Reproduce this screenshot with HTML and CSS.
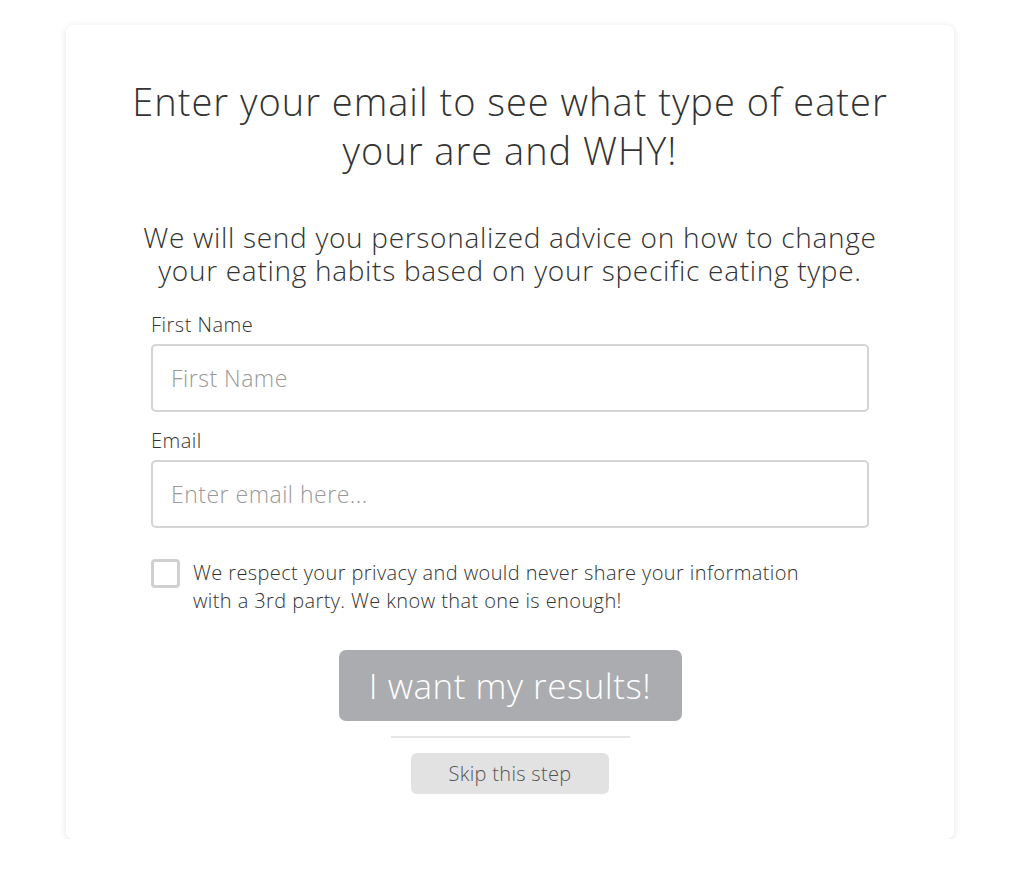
FILE: index.html
```html
<!DOCTYPE html>
<html lang="en">
<head>
    <meta charset="UTF-8">
    <meta name="viewport" content="width=device-width, initial-scale=1.0">
    <title>What type of eater are you?</title>
    <link rel="stylesheet" href="styles.css">
</head>
<body>

<div class="card">
    <h1 class="title">Enter your email to see what type of eater your are and WHY!</h1>
    <p class="intro">We will send you personalized advice on how to change your eating habits based on your specific eating type.</p>

    <form class="optin">
        <div class="field">
            <label for="firstName">First Name</label>
            <input type="text" id="firstName" name="firstName" placeholder="First Name">
        </div>
        <div class="field">
            <label for="email">Email</label>
            <input type="email" id="email" name="email" placeholder="Enter email here...">
        </div>
        <label class="consent">
            <span class="box"></span>
            <span>We respect your privacy and would never share your information with a 3rd party. We know that one is enough!</span>
        </label>
        <button type="submit" class="submit">I want my results!</button>
        <hr class="divider">
        <button type="button" class="skip">Skip this step</button>
    </form>
</div>

</body>
</html>
```

FILE: styles.css
```css
body {
    margin: 0;
    background: #fff;
    font-family: "Open Sans", Lato, sans-serif;
    color: #333;
}
.card {
    width: 888px;
    margin: 25px 0 0 66px;
    padding: 52px 40px 45px;
    box-sizing: border-box;
    background: #fff;
    border-radius: 7px;
    box-shadow: 0 1px 6px rgba(0, 0, 0, 0.12);
}
.title {
    margin: 0 10px 46px;
    font-size: 38px;
    font-weight: 300;
    line-height: 49px;
    letter-spacing: 1px;
    text-align: center;
    color: #333;
}
.intro {
    margin: 0 10px 25px;
    font-size: 28px;
    font-weight: 300;
    line-height: 33px;
    letter-spacing: 0.7px;
    text-align: center;
}
.optin {
    display: flex;
    flex-direction: column;
    margin: 0 45px;
}
.field {
    display: flex;
    flex-direction: column;
    margin-bottom: 16px;
}
.field label {
    font-size: 20px;
    font-weight: 300;
    line-height: 26px;
    letter-spacing: 0.5px;
    margin-bottom: 6px;
}
.field input {
    height: 68px;
    box-sizing: border-box;
    border: 2px solid #d4d4d4;
    border-radius: 5px;
    padding: 0 18px;
    font-family: inherit;
    font-size: 23px;
    font-weight: 300;
    letter-spacing: 0.5px;
    color: #333;
}
.field input::placeholder {
    color: #999;
}
.consent {
    display: flex;
    gap: 13px;
    margin-top: 15px;
    font-size: 20px;
    font-weight: 300;
    line-height: 28px;
    letter-spacing: 0.4px;
    padding-right: 36px;
}
.box {
    flex: none;
    width: 29px;
    height: 29px;
    box-sizing: border-box;
    border: 3px solid #d0d0d0;
    border-radius: 4px;
}
.submit {
    align-self: center;
    margin-top: 35px;
    width: 343px;
    height: 71px;
    background: #abacb0;
    border: none;
    border-radius: 7px;
    color: #fff;
    font-family: inherit;
    font-size: 35px;
    font-weight: 300;
    letter-spacing: 0.5px;
    cursor: pointer;
}
.divider {
    width: 239px;
    margin: 15px auto 0;
    border: none;
    border-top: 2px solid #e6e6e6;
}
.skip {
    align-self: center;
    margin-top: 15px;
    width: 198px;
    height: 41px;
    background: #e2e2e2;
    border: none;
    border-radius: 6px;
    color: #555;
    font-family: inherit;
    font-size: 20px;
    font-weight: 300;
    letter-spacing: 0.3px;
    cursor: pointer;
}
```
